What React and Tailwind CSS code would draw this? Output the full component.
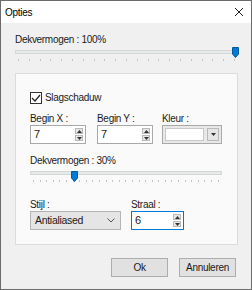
import React from 'react';

const font = { fontFamily: '"Liberation Sans", Arial, sans-serif', letterSpacing: '-0.3px' };

const Thumb = () => (
  <svg width="7" height="11" viewBox="0 0 7 11">
    <path d="M0.5 0.5 H6.5 V7 L3.5 10.5 L0.5 7 Z" fill="#0078d7" stroke="#005a9e" strokeWidth="1" />
  </svg>
);

const Slider = ({ width, pos, ticks }) => (
  <div className="relative" style={{ width }}>
    <div className="h-[4px] mt-[3px] bg-[#e7eaea] border border-[#d6d6d6]" />
    <div className="absolute top-0" style={{ left: pos }}>
      <Thumb />
    </div>
    <div className="flex justify-between px-[3px] mt-[5px]">
      {Array.from({ length: ticks }).map((_, i) => (
        <span key={i} className="w-px h-[2px] bg-[#c4c4c4]" />
      ))}
    </div>
  </div>
);

const SpinButtons = () => (
  <div className="flex flex-col w-[8px] gap-px my-[2px] mr-[2px]">
    <div className="flex-1 bg-[#e6e6e6] border border-[#b9b9b9] flex items-center justify-center">
      <svg width="5" height="3" viewBox="0 0 5 3"><path d="M2.5 0 L5 3 H0 Z" fill="#333" /></svg>
    </div>
    <div className="flex-1 bg-[#e6e6e6] border border-[#b9b9b9] flex items-center justify-center">
      <svg width="5" height="3" viewBox="0 0 5 3"><path d="M0 0 H5 L2.5 3 Z" fill="#333" /></svg>
    </div>
  </div>
);

const SpinBox = ({ value, w, focused }) => (
  <div
    className={`flex h-[19px] bg-white border ${focused ? 'border-[#0078d7]' : 'border-[#a9a9a9]'}`}
    style={{ width: w }}
  >
    <span className="flex-1 pl-[3px] leading-[17px] text-[11px]">{value}</span>
    <SpinButtons />
  </div>
);

const Field = ({ label, className = '', children }) => (
  <div className={`flex flex-col ${className}`}>
    <span className="leading-[13px]">{label}</span>
    {children}
  </div>
);

export default function App() {
  return (
    <div
      className="w-[252px] h-[290px] border border-[#6b6b6b] flex flex-col text-[10px] text-[#1a1a1a] bg-[#f0f0f0]"
      style={font}
    >
      <div className="h-[22px] bg-white flex items-center justify-between pl-[4px] pr-[8px]">
        <span className="text-black">Opties</span>
        <svg width="8" height="8" viewBox="0 0 8 8">
          <path d="M0 0 L8 8 M8 0 L0 8" stroke="#222" strokeWidth="1" />
        </svg>
      </div>

      <div className="flex-1 flex flex-col px-[14px] pt-[9px]">
        <span className="leading-[15px]">Dekvermogen : 100%</span>
        <Slider width={223} pos={217} ticks={21} />

        <div className="mt-[12px] w-[223px] h-[172px] bg-[#fafafa] border border-[#dcdcdc] px-[14px] pt-[16px]">
          <div className="flex items-center gap-[3px] h-[15px]">
            <div className="w-[12px] h-[12px] border border-[#333] bg-white flex items-center justify-center">
              <svg width="10" height="8" viewBox="0 0 10 8">
                <path d="M1 4 L4 7 L9 1" stroke="#222" strokeWidth="1.2" fill="none" />
              </svg>
            </div>
            <span className="leading-[15px]">Slagschaduw</span>
          </div>

          <div className="flex mt-[7px]">
            <Field label="Begin X :">
              <SpinBox value="7" w={56} />
            </Field>
            <Field label="Begin Y :" className="ml-[11px]">
              <SpinBox value="7" w={56} />
            </Field>
            <Field label="Kleur :" className="ml-[9px]">
              <div className="flex w-[60px] h-[19px] bg-[#e8e8e8] border border-[#a9a9a9] p-[2px] gap-[3px]">
                <div className="flex-1 bg-white border border-[#c8c8c8]" />
                <div className="w-[12px] bg-[#e6e6e6] border border-[#b9b9b9] flex items-center justify-center">
                  <svg width="5" height="3" viewBox="0 0 5 3"><path d="M0 0 H5 L2.5 3 Z" fill="#333" /></svg>
                </div>
              </div>
            </Field>
          </div>

          <div className="mt-[9px] leading-[15px]">Dekvermogen : 30%</div>
          <Slider width={192} pos={41} ticks={29} />

          <div className="flex gap-[10px] mt-[16px]">
            <Field label="Stijl :">
              <div className="flex items-center justify-between w-[91px] h-[19px] bg-[#e5e5e5] border border-[#b4b4b4] pl-[4px] pr-[5px]">
                <span className="text-[10.5px]">Antialiased</span>
                <svg width="8" height="5" viewBox="0 0 8 5">
                  <path d="M0.5 0.5 L4 4 L7.5 0.5" stroke="#555" strokeWidth="1" fill="none" />
                </svg>
              </div>
            </Field>
            <Field label="Straal :">
              <SpinBox value="6" w={53} focused />
            </Field>
          </div>
        </div>

        <div className="flex justify-end gap-[11px] mt-[13px] pr-[1px]">
          <button className="w-[57px] h-[19px] bg-[#e1e1e1] border border-[#adadad] leading-none">Ok</button>
          <button className="w-[57px] h-[19px] bg-[#e1e1e1] border border-[#adadad] leading-none">Annuleren</button>
        </div>
      </div>
    </div>
  );
}
